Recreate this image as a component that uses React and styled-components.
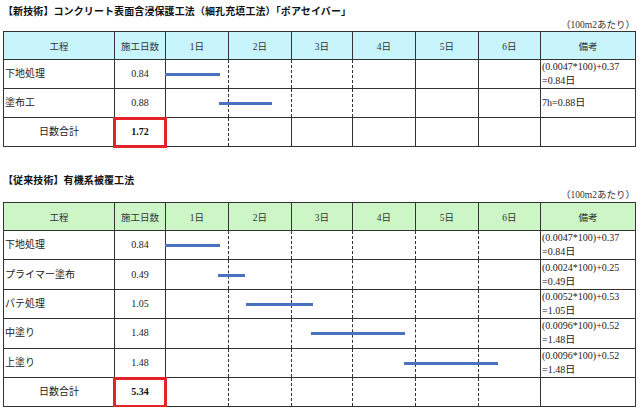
import React from "react";
import styled, { createGlobalStyle } from "styled-components";

const GlobalStyle = createGlobalStyle`
  html, body {
    margin: 0;
    padding: 0;
    background: #fff;
  }
`;

const FONT = `"Liberation Serif", "Noto Sans CJK JP", serif`;
const COLS = [111, 51, 63, 63, 61, 63, 63, 62, 95];
const DAYS = ["1日", "2日", "3日", "4日", "5日", "6日"];
const DAY_LEFT = 166;

const Page = styled.div`
  width: 640px;
  padding: 4px 0 0 3px;
  box-sizing: border-box;
  font-family: ${FONT};
  color: #222;
`;

const Section = styled.section`
  margin-top: ${(p) => p.$top || 0}px;
`;

const Title = styled.h2`
  margin: 0;
  height: 16px;
  line-height: 16px;
  font-size: 10px;
  font-weight: bold;
  color: #111;
  letter-spacing: 0.1px;
`;

const Unit = styled.div`
  width: 632px;
  height: 11px;
  line-height: 11px;
  text-align: right;
  font-size: 9.5px;
  color: #333;
  margin-top: ${(p) => p.$top || 0}px;
  margin-bottom: ${(p) => p.$bottom || 0}px;
`;

const Table = styled.table`
  border-collapse: collapse;
  table-layout: fixed;
  width: 632px;
  font-size: 10px;
  color: #222;
`;

const Head = styled.th`
  height: 27px;
  padding: 0;
  border: 1px solid #333;
  background: ${(p) => p.$bg};
  font-weight: normal;
  font-size: 9.5px;
  color: #333;
  text-align: center;
`;

const Cell = styled.td`
  position: relative;
  height: ${(p) => p.$h}px;
  padding: 0 0 0 ${(p) => (p.$align === "left" ? 1 : 0)}px;
  border: 1px solid #333;
  border-left-style: ${(p) => (p.$dl ? "dashed" : "solid")};
  border-right-style: ${(p) => (p.$dr ? "dashed" : "solid")};
  text-align: ${(p) => p.$align || "center"};
  vertical-align: middle;
  line-height: 14px;
  white-space: nowrap;
  overflow: visible;
`;

const Total = styled(Cell)`
  font-weight: bold;
  color: #111;
  &::after {
    content: "";
    position: absolute;
    left: -2px;
    right: -2px;
    top: -1px;
    bottom: -2px;
    border: 3px solid #e3232a;
  }
`;

const Bar = styled.span`
  position: absolute;
  top: 50%;
  height: 3px;
  margin-top: -1px;
  background: #4a72c0;
  z-index: 1;
`;

function DayCells({ h, dashed, bar }) {
  return DAYS.map((d, i) => (
    <Cell
      key={d}
      $h={h}
      $dl={dashed.includes(i)}
      $dr={dashed.includes(i + 1)}
    >
      {i === 0 && bar && (
        <Bar style={{ left: bar[0] - DAY_LEFT, width: bar[1] - bar[0] }} />
      )}
    </Cell>
  ));
}

function Schedule({ headBg, rows, total, h, dashed, totalDashed }) {
  return (
    <Table>
      <colgroup>
        {COLS.map((w, i) => (
          <col key={i} style={{ width: w }} />
        ))}
      </colgroup>
      <thead>
        <tr>
          <Head $bg={headBg}>工程</Head>
          <Head $bg={headBg}>施工日数</Head>
          {DAYS.map((d) => (
            <Head key={d} $bg={headBg}>
              {d}
            </Head>
          ))}
          <Head $bg={headBg}>備考</Head>
        </tr>
      </thead>
      <tbody>
        {rows.map((r) => (
          <tr key={r.name}>
            <Cell $h={h} $align="left">
              {r.name}
            </Cell>
            <Cell $h={h}>{r.days}</Cell>
            <DayCells h={h} dashed={dashed} bar={r.bar} />
            <Cell $h={h} $align="left">
              {r.note.map((n, i) => (
                <div key={i}>{n}</div>
              ))}
            </Cell>
          </tr>
        ))}
        <tr>
          <Cell $h={h}>日数合計</Cell>
          <Total $h={h}>{total}</Total>
          <DayCells h={h} dashed={totalDashed} />
          <Cell $h={h} />
        </tr>
      </tbody>
    </Table>
  );
}

const NEW_ROWS = [
  { name: "下地処理", days: "0.84", bar: [165, 220], note: ["(0.0047*100)+0.37", "=0.84日"] },
  { name: "塗布工", days: "0.88", bar: [219, 272], note: ["7h=0.88日"] },
];

const OLD_ROWS = [
  { name: "下地処理", days: "0.84", bar: [165, 220], note: ["(0.0047*100)+0.37", "=0.84日"] },
  { name: "プライマー塗布", days: "0.49", bar: [218, 245], note: ["(0.0024*100)+0.25", "=0.49日"] },
  { name: "パテ処理", days: "1.05", bar: [246, 313], note: ["(0.0052*100)+0.53", "=1.05日"] },
  { name: "中塗り", days: "1.48", bar: [311, 405], note: ["(0.0096*100)+0.52", "=1.48日"] },
  { name: "上塗り", days: "1.48", bar: [404, 498], note: ["(0.0096*100)+0.52", "=1.48日"] },
];

export default function App() {
  return (
    <>
      <GlobalStyle />
      <Page>
        <Section>
          <Title>【新技術】コンクリート表面含浸保護工法（細孔充填工法）「ポアセイバー」</Title>
          <Unit $bottom={0}>（100m2あたり）</Unit>
          <Schedule
            headBg="#c8f4fb"
            rows={NEW_ROWS}
            total="1.72"
            h={28}
            dashed={[1, 2, 3]}
            totalDashed={[1]}
          />
        </Section>
        <Section $top={26}>
          <Title>【従来技術】有機系被覆工法</Title>
          <Unit $top={1} $bottom={1}>（100m2あたり）</Unit>
          <Schedule
            headBg="#cdf6c6"
            rows={OLD_ROWS}
            total="5.34"
            h={28.4}
            dashed={[1, 2, 3, 4, 5]}
            totalDashed={[1, 2, 3, 4, 5]}
          />
        </Section>
      </Page>
    </>
  );
}
